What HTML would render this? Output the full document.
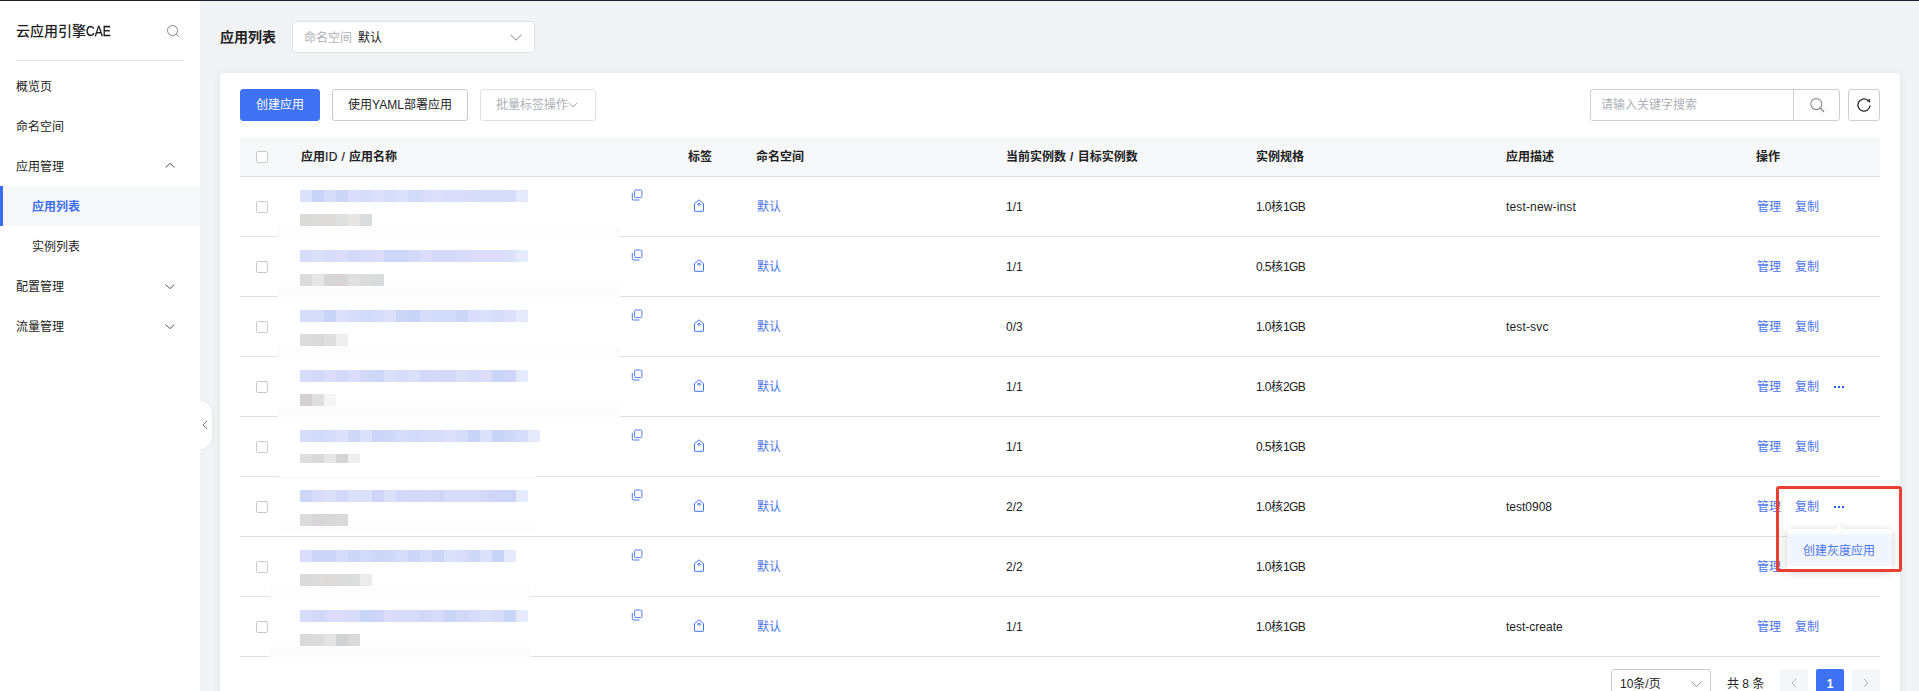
<!DOCTYPE html>
<html lang="zh-CN">
<head>
<meta charset="utf-8">
<title>云应用引擎CAE - 应用列表</title>
<style>
*{box-sizing:border-box;margin:0;padding:0}
html,body{width:1919px;height:691px;overflow:hidden}
body{position:relative;background:#f0f2f6;font-family:"Liberation Sans","Noto Sans CJK SC",sans-serif;font-size:12px;color:#222;line-height:20px}
#topline{position:absolute;left:0;top:0;width:1919px;height:1px;background:#1b1e2c;z-index:20}
#side{position:absolute;left:0;top:0;width:200px;height:691px;background:#fff}
#side .title{position:absolute;left:16px;top:21px;font-size:14px;font-weight:500;color:#1c1c1c;line-height:20px;white-space:nowrap}
#side .div{position:absolute;left:16px;top:60px;width:168px;height:1px;background:#dfe1e6}
#side .mi{position:absolute;left:0;width:200px;height:40px;line-height:42px;padding-left:16px;white-space:nowrap}
#side .mi.sub{padding-left:32px}
#side .mi.act{background:#f7f8fa;color:#3d6ef2;font-weight:700}
#side .mi.act:before{content:"";position:absolute;left:0;top:0;width:3px;height:40px;background:#3d6ef2}
#side svg{position:absolute}
#handle{position:absolute;left:200px;top:401px;width:12px;height:48px;background:#fff;border-radius:0 12px 12px 0;box-shadow:1px 0 3px rgba(0,0,0,.05)}
#hd{position:absolute;left:220px;top:27px;font-size:14px;font-weight:700;line-height:20px;white-space:nowrap}
#ns{position:absolute;left:292px;top:21px;width:243px;height:32px;background:#fff;border:1px solid #dfe1e6;border-radius:4px}
#ns span{position:absolute;top:6px;line-height:20px;white-space:nowrap}
#card{position:absolute;left:220px;top:73px;width:1680px;height:640px;background:#fff;border-radius:3px;box-shadow:0 1px 6px rgba(90,100,130,.10)}
.btn{position:absolute;top:16px;height:32px;line-height:30px;border:1px solid #c9cacd;border-radius:3px;text-align:center;white-space:nowrap;background:#fff}
.btn.pri{background:#3e72f3;border-color:#3e72f3;color:#fff}
.btn.dis{border-color:#dfe1e6;color:#adb0b8}
#search{position:absolute;left:1370px;top:16px;width:250px;height:32px;border:1px solid #cfcfd1;border-radius:3px;background:#fff}
#search .ph{position:absolute;left:10px;top:5px;color:#adb0b8;white-space:nowrap}
#search .sp{position:absolute;left:202px;top:0;width:1px;height:30px;background:#cfcfd1}
#refresh{position:absolute;left:1628px;top:16px;width:32px;height:32px;border:1px solid #cfcfd1;border-radius:3px;background:#fff}
#thead{position:absolute;left:20px;top:64px;width:1640px;height:40px;background:#f7f8fa;border-bottom:1px solid #dfe1e6;font-weight:700}
#thead>span{position:absolute;top:10px;white-space:nowrap;line-height:20px}
.cb{position:absolute;width:12px;height:12px;border:1px solid #c8cad1;border-radius:2px;background:#fff}
#tb{position:absolute;left:0;top:0}
.row{position:absolute;left:240px;width:1640px;height:60px;border-bottom:1px solid #dfe1e6}
.row .t{position:absolute;top:20px;line-height:20px;white-space:nowrap}
.lk{color:#4a74ea}
.n{letter-spacing:-.6px}
.w{letter-spacing:.15px}
.ico{position:absolute;line-height:0}
.dots{position:absolute;width:10px;height:2px}
.dots b{position:absolute;top:0;width:2px;height:2px;background:#2a5eea}
.dots b:nth-child(1){left:0}.dots b:nth-child(2){left:4px}.dots b:nth-child(3){left:8px}
#mos i{position:absolute;display:block}
#pop{position:absolute;left:1786.5px;top:529px;width:105px;height:41px;padding-top:5px;background:#fff;border-radius:3px;box-shadow:0 2px 10px rgba(0,0,0,.2);z-index:4}
#pop .it{height:32px;line-height:34px;background:#f0f5fe;color:#4a74ea;text-align:center;white-space:nowrap}
#poparrow{position:absolute;left:1833px;top:523.5px;width:0;height:0;border-left:6px solid transparent;border-right:6px solid transparent;border-bottom:6px solid #fff;z-index:4;filter:drop-shadow(0 -1px 1px rgba(0,0,0,.06))}
#redbox{position:absolute;left:1776px;top:486px;width:126px;height:86px;border:3px solid #ea3f33;border-radius:3px;z-index:5}
#pag{position:absolute}
</style>
</head>
<body>
<div id="side">
  <div class="title">云应用引擎<span style="display:inline-block;transform:scaleX(.86);transform-origin:0 50%;-webkit-text-stroke:.3px #1c1c1c">CAE</span></div>
  <svg style="left:166px;top:24px" width="14" height="14" viewBox="0 0 14 14" fill="none" stroke="#858585" stroke-width="1"><circle cx="6.5" cy="6.5" r="5"/><path d="M10.2 10.2l2.6 2.6"/></svg>
  <div class="div"></div>
  <div class="mi" style="top:66px">概览页</div>
  <div class="mi" style="top:106px">命名空间</div>
  <div class="mi" style="top:146px">应用管理</div>
  <svg style="left:165px;top:162px" width="10" height="7" viewBox="0 0 10 7" fill="none" stroke="#505050" stroke-width="1"><path d="M.7 5.4L5 1.4l4.3 4"/></svg>
  <div class="mi sub act" style="top:186px">应用列表</div>
  <div class="mi sub" style="top:226px">实例列表</div>
  <div class="mi" style="top:266px">配置管理</div>
  <svg style="left:165px;top:283px" width="10" height="7" viewBox="0 0 10 7" fill="none" stroke="#505050" stroke-width="1"><path d="M.7 1.6L5 5.6l4.3-4"/></svg>
  <div class="mi" style="top:306px">流量管理</div>
  <svg style="left:165px;top:323px" width="10" height="7" viewBox="0 0 10 7" fill="none" stroke="#505050" stroke-width="1"><path d="M.7 1.6L5 5.6l4.3-4"/></svg>
</div>
<div id="handle"><svg style="position:absolute;left:2px;top:19px" width="6" height="10" viewBox="0 0 6 10" fill="none" stroke="#71757f" stroke-width="1"><path d="M5 .8L1 5l4 4.2"/></svg></div>
<div id="hd">应用列表</div>
<div id="ns"><span style="left:11px;color:#adb0b8">命名空间</span><span style="left:65px">默认</span>
<svg style="position:absolute;left:217px;top:12px" width="12" height="7" viewBox="0 0 12 7" fill="none" stroke="#a8a8a8" stroke-width="1.1"><path d="M.7 .8L6 6l5.3-5.2"/></svg></div>
<div id="card">
  <div class="btn pri" style="left:20px;width:80px">创建应用</div>
  <div class="btn" style="left:112px;width:136px">使用YAML部署应用</div>
  <div class="btn dis" style="left:260px;width:116px;padding-right:2px">批量标签操作<svg style="vertical-align:middle;margin-top:-1px" width="10" height="6" viewBox="0 0 10 6" fill="none" stroke="#adb0b8" stroke-width="1"><path d="M.7 .8L5 5l4.3-4.2"/></svg></div>
  <div id="search"><span class="ph">请输入关键字搜索</span><span class="sp"></span>
  <svg style="position:absolute;left:218px;top:7px" width="16" height="16" viewBox="0 0 16 16" fill="none" stroke="#8a8a8c" stroke-width="1.1" stroke-linecap="round"><circle cx="7.3" cy="7.1" r="5.5"/><path d="M11.3 11.1l3.4 3.4" stroke-width="1.4"/></svg></div>
  <div id="refresh"><svg style="position:absolute;left:7px;top:7px" width="16" height="16" viewBox="0 0 16 16" fill="none" stroke="#2b2b2d" stroke-width="1.3"><path d="M14.1 8.5A6.1 6.1 0 1 1 11.9 3.3"/><path d="M14.1 1.8L10.5 3.9l3.6 1.5z" fill="#2b2b2d" stroke="none"/></svg></div>
  <div id="thead">
    <span class="cb" style="left:16px;top:14px"></span>
    <span style="left:61px">应用<span style="letter-spacing:.4px;font-weight:400;-webkit-text-stroke:.2px #222">ID / </span>应用名称</span>
    <span style="left:448px">标签</span>
    <span style="left:516px">命名空间</span>
    <span style="left:766px">当前实例数<span style="letter-spacing:.6px"> / </span>目标实例数</span>
    <span style="left:1016px">实例规格</span>
    <span style="left:1266px">应用描述</span>
    <span style="left:1516px">操作</span>
  </div>
</div>
<div id="tb">
<div class="row" style="top:177px"><span class="cb" style="left:16px;top:24px"></span><span class="ico" style="left:390.5px;top:12px"><svg class="ic" width="13" height="13" viewBox="0 0 13 13" fill="none" stroke="#4f7bee" stroke-width="1"><rect x="3.6" y="1" width="7.3" height="7.6" rx="1.2"/><path d="M1.3 3.8v6a1.2 1.2 0 0 0 1.2 1.2h6"/></svg></span><span class="ico" style="left:453px;top:22px"><svg class="ic" width="12" height="14" viewBox="0 0 12 14" fill="none" stroke="#4674ee" stroke-width="1"><path d="M1.5 4.6L6 .8l4.5 3.8V11.8a.5.5 0 0 1-.5.5H2a.5.5 0 0 1-.5-.5z"/><ellipse cx="6" cy="5.3" rx="1.4" ry=".9"/></svg></span><span class="t lk" style="left:517px">默认</span><span class="t" style="left:766px">1/1</span><span class="t" style="left:1016px"><span class="n">1.0</span>核<span class="n">1GB</span></span><span class="t w" style="left:1266px">test-new-inst</span><span class="t lk" style="left:1517px">管理</span><span class="t lk" style="left:1555px">复制</span></div>
<div class="row" style="top:237px"><span class="cb" style="left:16px;top:24px"></span><span class="ico" style="left:390.5px;top:12px"><svg class="ic" width="13" height="13" viewBox="0 0 13 13" fill="none" stroke="#4f7bee" stroke-width="1"><rect x="3.6" y="1" width="7.3" height="7.6" rx="1.2"/><path d="M1.3 3.8v6a1.2 1.2 0 0 0 1.2 1.2h6"/></svg></span><span class="ico" style="left:453px;top:22px"><svg class="ic" width="12" height="14" viewBox="0 0 12 14" fill="none" stroke="#4674ee" stroke-width="1"><path d="M1.5 4.6L6 .8l4.5 3.8V11.8a.5.5 0 0 1-.5.5H2a.5.5 0 0 1-.5-.5z"/><ellipse cx="6" cy="5.3" rx="1.4" ry=".9"/></svg></span><span class="t lk" style="left:517px">默认</span><span class="t" style="left:766px">1/1</span><span class="t" style="left:1016px"><span class="n">0.5</span>核<span class="n">1GB</span></span><span class="t lk" style="left:1517px">管理</span><span class="t lk" style="left:1555px">复制</span></div>
<div class="row" style="top:297px"><span class="cb" style="left:16px;top:24px"></span><span class="ico" style="left:390.5px;top:12px"><svg class="ic" width="13" height="13" viewBox="0 0 13 13" fill="none" stroke="#4f7bee" stroke-width="1"><rect x="3.6" y="1" width="7.3" height="7.6" rx="1.2"/><path d="M1.3 3.8v6a1.2 1.2 0 0 0 1.2 1.2h6"/></svg></span><span class="ico" style="left:453px;top:22px"><svg class="ic" width="12" height="14" viewBox="0 0 12 14" fill="none" stroke="#4674ee" stroke-width="1"><path d="M1.5 4.6L6 .8l4.5 3.8V11.8a.5.5 0 0 1-.5.5H2a.5.5 0 0 1-.5-.5z"/><ellipse cx="6" cy="5.3" rx="1.4" ry=".9"/></svg></span><span class="t lk" style="left:517px">默认</span><span class="t" style="left:766px">0/3</span><span class="t" style="left:1016px"><span class="n">1.0</span>核<span class="n">1GB</span></span><span class="t w" style="left:1266px">test-svc</span><span class="t lk" style="left:1517px">管理</span><span class="t lk" style="left:1555px">复制</span></div>
<div class="row" style="top:357px"><span class="cb" style="left:16px;top:24px"></span><span class="ico" style="left:390.5px;top:12px"><svg class="ic" width="13" height="13" viewBox="0 0 13 13" fill="none" stroke="#4f7bee" stroke-width="1"><rect x="3.6" y="1" width="7.3" height="7.6" rx="1.2"/><path d="M1.3 3.8v6a1.2 1.2 0 0 0 1.2 1.2h6"/></svg></span><span class="ico" style="left:453px;top:22px"><svg class="ic" width="12" height="14" viewBox="0 0 12 14" fill="none" stroke="#4674ee" stroke-width="1"><path d="M1.5 4.6L6 .8l4.5 3.8V11.8a.5.5 0 0 1-.5.5H2a.5.5 0 0 1-.5-.5z"/><ellipse cx="6" cy="5.3" rx="1.4" ry=".9"/></svg></span><span class="t lk" style="left:517px">默认</span><span class="t" style="left:766px">1/1</span><span class="t" style="left:1016px"><span class="n">1.0</span>核<span class="n">2GB</span></span><span class="t lk" style="left:1517px">管理</span><span class="t lk" style="left:1555px">复制</span><span class="dots" style="left:1594px;top:29px"><b></b><b></b><b></b></span></div>
<div class="row" style="top:417px"><span class="cb" style="left:16px;top:24px"></span><span class="ico" style="left:390.5px;top:12px"><svg class="ic" width="13" height="13" viewBox="0 0 13 13" fill="none" stroke="#4f7bee" stroke-width="1"><rect x="3.6" y="1" width="7.3" height="7.6" rx="1.2"/><path d="M1.3 3.8v6a1.2 1.2 0 0 0 1.2 1.2h6"/></svg></span><span class="ico" style="left:453px;top:22px"><svg class="ic" width="12" height="14" viewBox="0 0 12 14" fill="none" stroke="#4674ee" stroke-width="1"><path d="M1.5 4.6L6 .8l4.5 3.8V11.8a.5.5 0 0 1-.5.5H2a.5.5 0 0 1-.5-.5z"/><ellipse cx="6" cy="5.3" rx="1.4" ry=".9"/></svg></span><span class="t lk" style="left:517px">默认</span><span class="t" style="left:766px">1/1</span><span class="t" style="left:1016px"><span class="n">0.5</span>核<span class="n">1GB</span></span><span class="t lk" style="left:1517px">管理</span><span class="t lk" style="left:1555px">复制</span></div>
<div class="row" style="top:477px"><span class="cb" style="left:16px;top:24px"></span><span class="ico" style="left:390.5px;top:12px"><svg class="ic" width="13" height="13" viewBox="0 0 13 13" fill="none" stroke="#4f7bee" stroke-width="1"><rect x="3.6" y="1" width="7.3" height="7.6" rx="1.2"/><path d="M1.3 3.8v6a1.2 1.2 0 0 0 1.2 1.2h6"/></svg></span><span class="ico" style="left:453px;top:22px"><svg class="ic" width="12" height="14" viewBox="0 0 12 14" fill="none" stroke="#4674ee" stroke-width="1"><path d="M1.5 4.6L6 .8l4.5 3.8V11.8a.5.5 0 0 1-.5.5H2a.5.5 0 0 1-.5-.5z"/><ellipse cx="6" cy="5.3" rx="1.4" ry=".9"/></svg></span><span class="t lk" style="left:517px">默认</span><span class="t" style="left:766px">2/2</span><span class="t" style="left:1016px"><span class="n">1.0</span>核<span class="n">2GB</span></span><span class="t" style="left:1266px">test0908</span><span class="t lk" style="left:1517px">管理</span><span class="t lk" style="left:1555px">复制</span><span class="dots" style="left:1594px;top:29px"><b></b><b></b><b></b></span></div>
<div class="row" style="top:537px"><span class="cb" style="left:16px;top:24px"></span><span class="ico" style="left:390.5px;top:12px"><svg class="ic" width="13" height="13" viewBox="0 0 13 13" fill="none" stroke="#4f7bee" stroke-width="1"><rect x="3.6" y="1" width="7.3" height="7.6" rx="1.2"/><path d="M1.3 3.8v6a1.2 1.2 0 0 0 1.2 1.2h6"/></svg></span><span class="ico" style="left:453px;top:22px"><svg class="ic" width="12" height="14" viewBox="0 0 12 14" fill="none" stroke="#4674ee" stroke-width="1"><path d="M1.5 4.6L6 .8l4.5 3.8V11.8a.5.5 0 0 1-.5.5H2a.5.5 0 0 1-.5-.5z"/><ellipse cx="6" cy="5.3" rx="1.4" ry=".9"/></svg></span><span class="t lk" style="left:517px">默认</span><span class="t" style="left:766px">2/2</span><span class="t" style="left:1016px"><span class="n">1.0</span>核<span class="n">1GB</span></span><span class="t lk" style="left:1517px">管理</span><span class="t lk" style="left:1555px">复制</span></div>
<div class="row" style="top:597px"><span class="cb" style="left:16px;top:24px"></span><span class="ico" style="left:390.5px;top:12px"><svg class="ic" width="13" height="13" viewBox="0 0 13 13" fill="none" stroke="#4f7bee" stroke-width="1"><rect x="3.6" y="1" width="7.3" height="7.6" rx="1.2"/><path d="M1.3 3.8v6a1.2 1.2 0 0 0 1.2 1.2h6"/></svg></span><span class="ico" style="left:453px;top:22px"><svg class="ic" width="12" height="14" viewBox="0 0 12 14" fill="none" stroke="#4674ee" stroke-width="1"><path d="M1.5 4.6L6 .8l4.5 3.8V11.8a.5.5 0 0 1-.5.5H2a.5.5 0 0 1-.5-.5z"/><ellipse cx="6" cy="5.3" rx="1.4" ry=".9"/></svg></span><span class="t lk" style="left:517px">默认</span><span class="t" style="left:766px">1/1</span><span class="t" style="left:1016px"><span class="n">1.0</span>核<span class="n">1GB</span></span><span class="t" style="left:1266px">test-create</span><span class="t lk" style="left:1517px">管理</span><span class="t lk" style="left:1555px">复制</span></div>
</div>
<div id="mos">
<i style="left:277px;top:226px;width:343px;height:12px;background:#fcfcfc"></i>
<i style="left:300px;top:190px;width:12px;height:12px;background:#dbe1fb"></i><i style="left:312px;top:190px;width:12px;height:12px;background:#c9d5f8"></i><i style="left:324px;top:190px;width:12px;height:12px;background:#d5ddfa"></i><i style="left:336px;top:190px;width:12px;height:12px;background:#ccd6f6"></i><i style="left:348px;top:190px;width:12px;height:12px;background:#dadcfa"></i><i style="left:360px;top:190px;width:12px;height:12px;background:#d6dcf9"></i><i style="left:372px;top:190px;width:12px;height:12px;background:#dde0fa"></i><i style="left:384px;top:190px;width:12px;height:12px;background:#d6dcf9"></i><i style="left:396px;top:190px;width:12px;height:12px;background:#dbe1fb"></i><i style="left:408px;top:190px;width:12px;height:12px;background:#d1dbf9"></i><i style="left:420px;top:190px;width:12px;height:12px;background:#dadcfa"></i><i style="left:432px;top:190px;width:12px;height:12px;background:#dde0fa"></i><i style="left:444px;top:190px;width:12px;height:12px;background:#dadcf9"></i><i style="left:456px;top:190px;width:12px;height:12px;background:#dadcfa"></i><i style="left:468px;top:190px;width:12px;height:12px;background:#d6dcf9"></i><i style="left:480px;top:190px;width:12px;height:12px;background:#d5ddfa"></i><i style="left:492px;top:190px;width:12px;height:12px;background:#d5ddfa"></i><i style="left:504px;top:190px;width:12px;height:12px;background:#d6dcf9"></i><i style="left:516px;top:190px;width:12px;height:12px;background:#e6eafd"></i>
<i style="left:300px;top:214px;width:12px;height:12px;background:#dadad8"></i>
<i style="left:312px;top:214px;width:12px;height:12px;background:#dcdcda"></i>
<i style="left:324px;top:214px;width:12px;height:12px;background:#dddcd8"></i>
<i style="left:336px;top:214px;width:12px;height:12px;background:#dfe1e1"></i>
<i style="left:348px;top:214px;width:12px;height:12px;background:#e6e5e3"></i>
<i style="left:360px;top:214px;width:12px;height:12px;background:#d9dbde"></i>
<i style="left:277px;top:286px;width:343px;height:12px;background:#fcfcfc"></i>
<i style="left:300px;top:250px;width:12px;height:12px;background:#d6dcf9"></i><i style="left:312px;top:250px;width:12px;height:12px;background:#dde0fa"></i><i style="left:324px;top:250px;width:12px;height:12px;background:#d5ddfa"></i><i style="left:336px;top:250px;width:12px;height:12px;background:#dadcfa"></i><i style="left:348px;top:250px;width:12px;height:12px;background:#d1dbf9"></i><i style="left:360px;top:250px;width:12px;height:12px;background:#d6dcf9"></i><i style="left:372px;top:250px;width:12px;height:12px;background:#dadcf9"></i><i style="left:384px;top:250px;width:12px;height:12px;background:#ccd6f6"></i><i style="left:396px;top:250px;width:12px;height:12px;background:#ccd6f6"></i><i style="left:408px;top:250px;width:12px;height:12px;background:#d1dbf9"></i><i style="left:420px;top:250px;width:12px;height:12px;background:#dadcfa"></i><i style="left:432px;top:250px;width:12px;height:12px;background:#d1dbf9"></i><i style="left:444px;top:250px;width:12px;height:12px;background:#d1dbf9"></i><i style="left:456px;top:250px;width:12px;height:12px;background:#d5ddfa"></i><i style="left:468px;top:250px;width:12px;height:12px;background:#dadcfa"></i><i style="left:480px;top:250px;width:12px;height:12px;background:#dadcf9"></i><i style="left:492px;top:250px;width:12px;height:12px;background:#dadcfa"></i><i style="left:504px;top:250px;width:12px;height:12px;background:#dde0fa"></i><i style="left:516px;top:250px;width:12px;height:12px;background:#e6eafd"></i>
<i style="left:300px;top:274px;width:12px;height:12px;background:#dcdcdc"></i>
<i style="left:312px;top:274px;width:12px;height:12px;background:#e6e6e6"></i>
<i style="left:324px;top:274px;width:12px;height:12px;background:#d6d6d6"></i>
<i style="left:336px;top:274px;width:12px;height:12px;background:#dad4d6"></i>
<i style="left:348px;top:274px;width:12px;height:12px;background:#e0e0e0"></i>
<i style="left:360px;top:274px;width:12px;height:12px;background:#dcdcdc"></i>
<i style="left:372px;top:274px;width:12px;height:12px;background:#d8dcdc"></i>
<i style="left:277px;top:346px;width:343px;height:12px;background:#fcfcfc"></i>
<i style="left:300px;top:310px;width:12px;height:12px;background:#d6ddfa"></i><i style="left:312px;top:310px;width:12px;height:12px;background:#d5ddfa"></i><i style="left:324px;top:310px;width:12px;height:12px;background:#c9d5f8"></i><i style="left:336px;top:310px;width:12px;height:12px;background:#dde0fa"></i><i style="left:348px;top:310px;width:12px;height:12px;background:#d6dcf9"></i><i style="left:360px;top:310px;width:12px;height:12px;background:#d1dbf9"></i><i style="left:372px;top:310px;width:12px;height:12px;background:#d6ddfa"></i><i style="left:384px;top:310px;width:12px;height:12px;background:#dde0fa"></i><i style="left:396px;top:310px;width:12px;height:12px;background:#ccd6f6"></i><i style="left:408px;top:310px;width:12px;height:12px;background:#c9d5f8"></i><i style="left:420px;top:310px;width:12px;height:12px;background:#d6dcf9"></i><i style="left:432px;top:310px;width:12px;height:12px;background:#d1dbf9"></i><i style="left:444px;top:310px;width:12px;height:12px;background:#d1dbf9"></i><i style="left:456px;top:310px;width:12px;height:12px;background:#ccd6f6"></i><i style="left:468px;top:310px;width:12px;height:12px;background:#dadcf9"></i><i style="left:480px;top:310px;width:12px;height:12px;background:#dbe1fb"></i><i style="left:492px;top:310px;width:12px;height:12px;background:#d6dcf9"></i><i style="left:504px;top:310px;width:12px;height:12px;background:#dde0fa"></i><i style="left:516px;top:310px;width:12px;height:12px;background:#e6eafd"></i>
<i style="left:300px;top:334px;width:12px;height:12px;background:#dcdcdc"></i>
<i style="left:312px;top:334px;width:12px;height:12px;background:#dadada"></i>
<i style="left:324px;top:334px;width:12px;height:12px;background:#dedede"></i>
<i style="left:336px;top:334px;width:12px;height:12px;background:#eeeeee"></i>
<i style="left:277px;top:406px;width:343px;height:12px;background:#fcfcfc"></i>
<i style="left:300px;top:370px;width:12px;height:12px;background:#d6dcf9"></i><i style="left:312px;top:370px;width:12px;height:12px;background:#d1dbf9"></i><i style="left:324px;top:370px;width:12px;height:12px;background:#dadcfa"></i><i style="left:336px;top:370px;width:12px;height:12px;background:#d1dbf9"></i><i style="left:348px;top:370px;width:12px;height:12px;background:#dadcf9"></i><i style="left:360px;top:370px;width:12px;height:12px;background:#cfd8f7"></i><i style="left:372px;top:370px;width:12px;height:12px;background:#ccd6f6"></i><i style="left:384px;top:370px;width:12px;height:12px;background:#dde0fa"></i><i style="left:396px;top:370px;width:12px;height:12px;background:#d5ddfa"></i><i style="left:408px;top:370px;width:12px;height:12px;background:#dbe1fb"></i><i style="left:420px;top:370px;width:12px;height:12px;background:#cfd8f7"></i><i style="left:432px;top:370px;width:12px;height:12px;background:#d1dbf9"></i><i style="left:444px;top:370px;width:12px;height:12px;background:#cfd8f7"></i><i style="left:456px;top:370px;width:12px;height:12px;background:#dbe1fb"></i><i style="left:468px;top:370px;width:12px;height:12px;background:#d6ddfa"></i><i style="left:480px;top:370px;width:12px;height:12px;background:#dadcf9"></i><i style="left:492px;top:370px;width:12px;height:12px;background:#c9d5f8"></i><i style="left:504px;top:370px;width:12px;height:12px;background:#cdd5f8"></i><i style="left:516px;top:370px;width:12px;height:12px;background:#e6eafd"></i>
<i style="left:300px;top:394px;width:12px;height:12px;background:#d4cfd0"></i>
<i style="left:312px;top:394px;width:12px;height:12px;background:#dedede"></i>
<i style="left:324px;top:394px;width:12px;height:12px;background:#f5f5f5"></i>
<i style="left:279px;top:475px;width:257px;height:4px;background:#fcfcfc"></i>
<i style="left:300px;top:430px;width:12px;height:12px;background:#d6dcf9"></i><i style="left:312px;top:430px;width:12px;height:12px;background:#d1dbf9"></i><i style="left:324px;top:430px;width:12px;height:12px;background:#d6ddfa"></i><i style="left:336px;top:430px;width:12px;height:12px;background:#dde0fa"></i><i style="left:348px;top:430px;width:12px;height:12px;background:#cfd8f7"></i><i style="left:360px;top:430px;width:12px;height:12px;background:#dbe1fb"></i><i style="left:372px;top:430px;width:12px;height:12px;background:#cdd5f8"></i><i style="left:384px;top:430px;width:12px;height:12px;background:#cfd8f7"></i><i style="left:396px;top:430px;width:12px;height:12px;background:#d6ddfa"></i><i style="left:408px;top:430px;width:12px;height:12px;background:#d1dbf9"></i><i style="left:420px;top:430px;width:12px;height:12px;background:#d6dcf9"></i><i style="left:432px;top:430px;width:12px;height:12px;background:#d6dcf9"></i><i style="left:444px;top:430px;width:12px;height:12px;background:#dde0fa"></i><i style="left:456px;top:430px;width:12px;height:12px;background:#d5ddfa"></i><i style="left:468px;top:430px;width:12px;height:12px;background:#c9d5f8"></i><i style="left:480px;top:430px;width:12px;height:12px;background:#dbe1fb"></i><i style="left:492px;top:430px;width:12px;height:12px;background:#c9d5f8"></i><i style="left:504px;top:430px;width:12px;height:12px;background:#cfd8f7"></i><i style="left:516px;top:430px;width:12px;height:12px;background:#d5ddfa"></i><i style="left:528px;top:430px;width:12px;height:12px;background:#e6eafd"></i>
<i style="left:300px;top:454px;width:12px;height:9px;background:#dedede"></i>
<i style="left:312px;top:454px;width:12px;height:9px;background:#dadada"></i>
<i style="left:324px;top:454px;width:12px;height:9px;background:#e6e6e6"></i>
<i style="left:336px;top:454px;width:12px;height:9px;background:#d4d4d4"></i>
<i style="left:348px;top:454px;width:12px;height:9px;background:#eeeeee"></i>
<i style="left:279px;top:526px;width:257px;height:7px;background:#fcfcfc"></i>
<i style="left:300px;top:490px;width:12px;height:12px;background:#ccd6f6"></i><i style="left:312px;top:490px;width:12px;height:12px;background:#d6dcf9"></i><i style="left:324px;top:490px;width:12px;height:12px;background:#dde0fa"></i><i style="left:336px;top:490px;width:12px;height:12px;background:#d1dbf9"></i><i style="left:348px;top:490px;width:12px;height:12px;background:#dbe1fb"></i><i style="left:360px;top:490px;width:12px;height:12px;background:#dbe1fb"></i><i style="left:372px;top:490px;width:12px;height:12px;background:#cdd5f8"></i><i style="left:384px;top:490px;width:12px;height:12px;background:#dbe1fb"></i><i style="left:396px;top:490px;width:12px;height:12px;background:#d1dbf9"></i><i style="left:408px;top:490px;width:12px;height:12px;background:#cfd8f7"></i><i style="left:420px;top:490px;width:12px;height:12px;background:#d1dbf9"></i><i style="left:432px;top:490px;width:12px;height:12px;background:#cfd8f7"></i><i style="left:444px;top:490px;width:12px;height:12px;background:#d6dcf9"></i><i style="left:456px;top:490px;width:12px;height:12px;background:#d6dcf9"></i><i style="left:468px;top:490px;width:12px;height:12px;background:#d6ddfa"></i><i style="left:480px;top:490px;width:12px;height:12px;background:#cfd8f7"></i><i style="left:492px;top:490px;width:12px;height:12px;background:#cdd5f8"></i><i style="left:504px;top:490px;width:12px;height:12px;background:#ccd6f6"></i><i style="left:516px;top:490px;width:12px;height:12px;background:#e6eafd"></i>
<i style="left:300px;top:514px;width:12px;height:12px;background:#dcdcdc"></i>
<i style="left:312px;top:514px;width:12px;height:12px;background:#d8d6d8"></i>
<i style="left:324px;top:514px;width:12px;height:12px;background:#d8d8d8"></i>
<i style="left:336px;top:514px;width:12px;height:12px;background:#dadada"></i>
<i style="left:270px;top:586px;width:260px;height:12px;background:#fcfcfc"></i>
<i style="left:300px;top:550px;width:12px;height:12px;background:#dadcfa"></i><i style="left:312px;top:550px;width:12px;height:12px;background:#cdd5f8"></i><i style="left:324px;top:550px;width:12px;height:12px;background:#cdd5f8"></i><i style="left:336px;top:550px;width:12px;height:12px;background:#d6ddfa"></i><i style="left:348px;top:550px;width:12px;height:12px;background:#ccd6f6"></i><i style="left:360px;top:550px;width:12px;height:12px;background:#d1dbf9"></i><i style="left:372px;top:550px;width:12px;height:12px;background:#ccd6f6"></i><i style="left:384px;top:550px;width:12px;height:12px;background:#cfd8f7"></i><i style="left:396px;top:550px;width:12px;height:12px;background:#d6ddfa"></i><i style="left:408px;top:550px;width:12px;height:12px;background:#cdd5f8"></i><i style="left:420px;top:550px;width:12px;height:12px;background:#d5ddfa"></i><i style="left:432px;top:550px;width:12px;height:12px;background:#ccd6f6"></i><i style="left:444px;top:550px;width:12px;height:12px;background:#dbe1fb"></i><i style="left:456px;top:550px;width:12px;height:12px;background:#dadcfa"></i><i style="left:468px;top:550px;width:12px;height:12px;background:#cfd8f7"></i><i style="left:480px;top:550px;width:12px;height:12px;background:#dbe1fb"></i><i style="left:492px;top:550px;width:12px;height:12px;background:#c9d5f8"></i><i style="left:504px;top:550px;width:12px;height:12px;background:#e6eafd"></i>
<i style="left:300px;top:574px;width:12px;height:12px;background:#dadada"></i>
<i style="left:312px;top:574px;width:12px;height:12px;background:#dcdcdc"></i>
<i style="left:324px;top:574px;width:12px;height:12px;background:#dddbd9"></i>
<i style="left:336px;top:574px;width:12px;height:12px;background:#dcdcdc"></i>
<i style="left:348px;top:574px;width:12px;height:12px;background:#dcdede"></i>
<i style="left:360px;top:574px;width:12px;height:12px;background:#ececec"></i>
<i style="left:270px;top:646px;width:260px;height:12px;background:#fcfcfc"></i>
<i style="left:300px;top:610px;width:12px;height:12px;background:#d6dcf9"></i><i style="left:312px;top:610px;width:12px;height:12px;background:#cfd8f7"></i><i style="left:324px;top:610px;width:12px;height:12px;background:#dadcfa"></i><i style="left:336px;top:610px;width:12px;height:12px;background:#dadcf9"></i><i style="left:348px;top:610px;width:12px;height:12px;background:#d6ddfa"></i><i style="left:360px;top:610px;width:12px;height:12px;background:#c9d5f8"></i><i style="left:372px;top:610px;width:12px;height:12px;background:#cdd5f8"></i><i style="left:384px;top:610px;width:12px;height:12px;background:#dadcf9"></i><i style="left:396px;top:610px;width:12px;height:12px;background:#d5ddfa"></i><i style="left:408px;top:610px;width:12px;height:12px;background:#d5ddfa"></i><i style="left:420px;top:610px;width:12px;height:12px;background:#cfd8f7"></i><i style="left:432px;top:610px;width:12px;height:12px;background:#d6dcf9"></i><i style="left:444px;top:610px;width:12px;height:12px;background:#c9d5f8"></i><i style="left:456px;top:610px;width:12px;height:12px;background:#cfd8f7"></i><i style="left:468px;top:610px;width:12px;height:12px;background:#d5ddfa"></i><i style="left:480px;top:610px;width:12px;height:12px;background:#dde0fa"></i><i style="left:492px;top:610px;width:12px;height:12px;background:#d6ddfa"></i><i style="left:504px;top:610px;width:12px;height:12px;background:#c9d5f8"></i><i style="left:516px;top:610px;width:12px;height:12px;background:#e6eafd"></i>
<i style="left:300px;top:634px;width:12px;height:12px;background:#dadada"></i>
<i style="left:312px;top:634px;width:12px;height:12px;background:#dcdcdc"></i>
<i style="left:324px;top:634px;width:12px;height:12px;background:#e4e4e4"></i>
<i style="left:336px;top:634px;width:12px;height:12px;background:#d0d2d4"></i>
<i style="left:348px;top:634px;width:12px;height:12px;background:#dadada"></i>
</div>
<div id="pop"><div class="it">创建灰度应用</div></div>
<div id="poparrow"></div>
<div id="redbox"></div>
<div id="pag">
  <div style="position:absolute;left:1611px;top:669px;width:100px;height:32px;border:1px solid #c8cad1;border-radius:3px;background:#fff"><span style="position:absolute;left:8px;top:4px;white-space:nowrap">10条/页</span>
  <svg style="position:absolute;left:79px;top:11px" width="11" height="7" viewBox="0 0 11 7" fill="none" stroke="#8a8e99" stroke-width="1"><path d="M.7 .8L5.5 5.6 10.3 .8"/></svg></div>
  <span style="position:absolute;left:1727px;top:674px;white-space:nowrap">共 8 条</span>
  <div style="position:absolute;left:1780px;top:669px;width:28px;height:28px;background:#f5f6fa;border-radius:2px"><svg style="position:absolute;left:11px;top:9px" width="6" height="10" viewBox="0 0 6 10" fill="none" stroke="#adb0b8" stroke-width="1"><path d="M5 .8L1 5l4 4.2"/></svg></div>
  <div style="position:absolute;left:1816px;top:669px;width:28px;height:28px;background:#3e72f3;border-radius:2px;color:#fff;font-weight:700;text-align:center;line-height:30px">1</div>
  <div style="position:absolute;left:1852px;top:669px;width:28px;height:28px;background:#f5f6fa;border-radius:2px"><svg style="position:absolute;left:11px;top:9px" width="6" height="10" viewBox="0 0 6 10" fill="none" stroke="#adb0b8" stroke-width="1"><path d="M1 .8L5 5 1 9.2"/></svg></div>
</div>
<div id="topline"></div>
</body>
</html>
